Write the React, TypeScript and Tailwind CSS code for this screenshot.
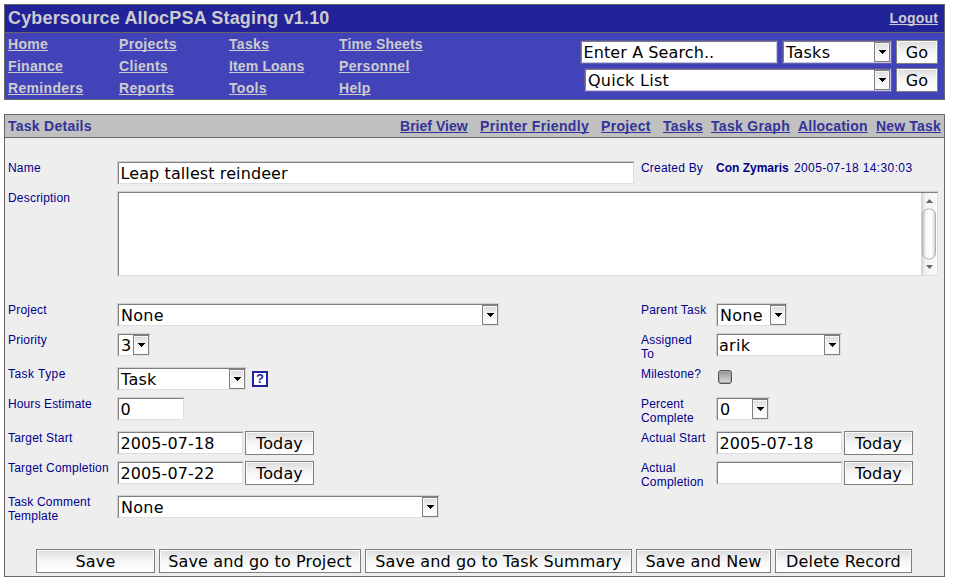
import React from "react";

const CONTROL_FONT = "font-['DejaVu_Sans',sans-serif] text-[16px] text-black";

type Tone = "dark" | "light";

const FRAME: Record<Tone, string> = {
  dark: "border-t-[#58589f] border-l-[#58589f] border-r-[#5f5fae] border-b-[#5f5fae]",
  light: "border-t-[#cfcfcf] border-l-[#cfcfcf] border-r-[#eeeeee] border-b-[#eeeeee]",
};
const INNER: Record<Tone, string> = {
  dark: "border-t-[#7a7a8c] border-l-[#7a7a8c] border-r-[#c3c3e6] border-b-[#c3c3e6]",
  light: "border-t-[#7f7f7f] border-l-[#7f7f7f] border-r-[#dedede] border-b-[#dedede]",
};

function Frame({ w, tone = "light", h = "h-6", children }: { w: string; tone?: Tone; h?: string; children: React.ReactNode }) {
  return (
    <div className={`flex shrink-0 border ${FRAME[tone]} ${w} ${h}`}>
      <div className={`flex min-w-0 flex-1 border bg-white ${INNER[tone]}`}>{children}</div>
    </div>
  );
}

function TextInput({ w, value, tone }: { w: string; value: string; tone?: Tone }) {
  return (
    <Frame w={w} tone={tone}>
      <input defaultValue={value} className={`h-5 w-full min-w-0 bg-transparent pt-px pl-[1.5px] leading-[19px] tracking-[0.1px] outline-none ${CONTROL_FONT}`} />
    </Frame>
  );
}

function SelectBox({ w, value, tone, pad = "pl-[2px]" }: { w: string; value: string; tone?: Tone; pad?: string }) {
  return (
    <Frame w={w} tone={tone}>
      <div className={`h-5 min-w-0 flex-1 overflow-hidden leading-[22px] tracking-[0.28px] whitespace-nowrap ${pad} ${CONTROL_FONT}`}>{value}</div>
      <div className="flex h-5 w-4 shrink-0 items-center justify-center border border-[#7f7f7f] bg-linear-to-b from-[#dddddd] via-[#f3f3f3] to-white shadow-[inset_0_0_0_1px_#f8f8f8]">
        <svg width="7" height="4" viewBox="0 0 7 4" shapeRendering="crispEdges">
          <path d="M0 0H7V1H6V2H5V3H4V4H3V3H2V2H1V1H0Z" fill="#000" />
        </svg>
      </div>
    </Frame>
  );
}

function Button({ w, children }: { w: string; children: string }) {
  return (
    <button
      className={`flex h-6 shrink-0 items-center justify-center whitespace-nowrap border border-[#7f7f7f] bg-linear-to-b from-[#dcdcdc] via-[#f6f6f6] via-50% to-white pt-[2px] leading-5 tracking-[0.14px] shadow-[inset_0_0_0_1px_#fafafa] ${w} ${CONTROL_FONT}`}
    >
      {children}
    </button>
  );
}

function Link({ children, className = "" }: { children: string; className?: string }) {
  return (
    <a
      href="#"
      className={`whitespace-nowrap underline decoration-1 underline-offset-1 [text-decoration-skip-ink:none] ${className}`}
    >
      {children}
    </a>
  );
}

function Row({ h, label, children, right, control }: { h: string; label: React.ReactNode; children: React.ReactNode; right?: string; control?: React.ReactNode }) {
  return (
    <div className={`flex items-start ${h}`}>
      <div className="w-[109px] shrink-0 whitespace-pre">{label}</div>
      <div className="flex w-[524px] shrink-0">{children}</div>
      {right && <div className="w-[75px] shrink-0 whitespace-pre">{right}</div>}
      {control}
    </div>
  );
}

const NAV = [
  ["Home", "Projects", "Tasks", "Time Sheets"],
  ["Finance", "Clients", "Item Loans", "Personnel"],
  ["Reminders", "Reports", "Tools", "Help"],
];

export default function App() {
  return (
    <div className="h-[584px] w-[954px] bg-white pt-1 pl-1 font-['Liberation_Sans',Arial,sans-serif]">
      <header className="w-[941px] border border-[#666666] font-bold text-[#cccccc]">
        <div className="flex h-7 items-center justify-between border-b border-[#666666] bg-[#222299] pr-[6px] pl-[3px]">
          <h1 className="pb-px text-[18px] leading-[26px] tracking-[0.17px]">Cybersource AllocPSA Staging v1.10</h1>
          <Link className="text-[14px] tracking-[0.2px]">Logout</Link>
        </div>
        <div className="flex h-[66px] justify-between bg-[#4242b9] pr-[6px] pl-[3px]">
          <nav className="grid grid-cols-[111px_110px_110px_110px] text-[14px] leading-[22px] tracking-[0.33px]">
            {NAV.flat().map((n) => (
              <div key={n}><Link className={n.includes(" ") ? "tracking-[0.14px]" : ""}>{n}</Link></div>
            ))}
          </nav>
          <div className="flex flex-col items-end gap-1 pt-[7px] font-normal">
            <div className="flex">
              <TextInput tone="dark" w="w-[198px]" value="Enter A Search.." />
              <div className="w-1" />
              <SelectBox tone="dark" w="w-[110px]" value="Tasks" />
              <div className="w-1" />
              <Button w="w-[42px]">Go</Button>
            </div>
            <div className="flex">
              <SelectBox tone="dark" w="w-[308px]" value="Quick List" />
              <div className="w-1" />
              <Button w="w-[42px]">Go</Button>
            </div>
          </div>
        </div>
      </header>

      <main className="mt-[14px] h-[463px] w-[941px] border border-[#666666] bg-[#eeeeee]">
        <div className="flex h-[23px] items-center justify-between border-b border-[#666666] bg-[#c0c0c0] pr-[3px] pl-[3px] text-[14px] leading-[22px] font-bold tracking-[0.26px] text-[#333399]">
          <h2>Task Details</h2>
          <div className="flex">
            <Link className="w-20 tracking-[0.03px]">Brief View</Link>
            <Link className="w-[121px] tracking-[0.35px]">Printer Friendly</Link>
            <Link className="w-[62px] tracking-[0.33px]">Project</Link>
            <Link className="w-12">Tasks</Link>
            <Link className="w-[87px] tracking-[0.3px]">Task Graph</Link>
            <Link className="w-[78px] tracking-[0.2px]">Allocation</Link>
            <Link className="w-[65px] tracking-[0.16px]">New Task</Link>
          </div>
        </div>

        <form className="pt-[23px] pl-[3px] text-[12px] leading-[14px] tracking-[0.2px] text-[#00008b]">
          <Row h="h-[30px]" label="Name" right="Created By" control={<div className="flex gap-[5px] whitespace-nowrap tracking-[0.37px]"><b className="w-[73px] tracking-normal">Con Zymaris</b><span>2005-07-18 14:30:03</span></div>}>
            <TextInput w="w-[518px]" value="Leap tallest reindeer" />
          </Row>
          <Row h="h-[112px]" label="Description">
            <Frame w="w-[822px]" h="h-[86px]">
              <textarea className={`h-full flex-1 resize-none outline-none ${CONTROL_FONT}`} />
              <div className="mr-px flex w-[15px] flex-col items-center bg-linear-to-r from-[#cfcfcf] via-[#f2f2f2] via-30% to-[#f8f8f8]">
                <svg width="15" height="82" viewBox="0 0 15 82">
                  <defs>
                    <linearGradient id="thumb">
                      <stop offset="0" stopColor="#c4c4c4" />
                      <stop offset=".3" stopColor="#fafafa" />
                      <stop offset=".7" stopColor="#ffffff" />
                      <stop offset="1" stopColor="#cccccc" />
                    </linearGradient>
                  </defs>
                  <path d="M8.5 6L12 10H5Z" fill="#666" />
                  <rect x="1.5" y="16" width="13" height="50" rx="6" fill="url(#thumb)" stroke="#b0b0b0" />
                  <path d="M8.5 76L12 72H5Z" fill="#666" />
                </svg>
              </div>
            </Frame>
          </Row>
          <Row h="h-[30px]" label="Project" right="Parent Task" control={<SelectBox w="w-[72px]" value="None" />}>
            <SelectBox w="w-[383px]" value="None" />
          </Row>
          <Row h="h-[34px]" label="Priority" right={"Assigned\nTo"} control={<SelectBox w="w-[126px]" value="arik" pad="pl-px" />}>
            <SelectBox w="w-[34px]" value="3" />
          </Row>
          <Row
            h="h-[30px]"
            label={<span className="tracking-[0.45px]">Task Type</span>}
            right="Milestone?"
            control={<div className="mt-[3px] ml-[2px] h-[14px] w-[14px] rounded-[3px] border border-[#555555] bg-linear-to-b from-[#909090] via-[#b8b8b8] to-[#dddddd] shadow-[inset_0_0_0_1px_#a8a8a8]" />}
          >
            <SelectBox w="w-[130px]" value="Task" />
            <div className="mt-1 ml-[5px] flex h-4 w-4 items-center justify-center border-2 border-[#2222a8] bg-white text-[13px] leading-3 font-bold tracking-normal text-[#2222a8]">?</div>
          </Row>
          <Row h="h-[34px]" label={<span className="tracking-[0.12px]">Hours Estimate</span>} right={"Percent\nComplete"} control={<SelectBox w="w-[54px]" value="0" />}>
            <TextInput w="w-[68px]" value="0" />
          </Row>
          <Row h="h-[30px]" label="Target Start" right="Actual Start" control={<div className="flex gap-px"><TextInput w="w-[127px]" value="2005-07-18" /><Button w="w-[69px]">Today</Button></div>}>
            <div className="flex gap-px"><TextInput w="w-[127px]" value="2005-07-18" /><Button w="w-[69px]">Today</Button></div>
          </Row>
          <Row h="h-[34px]" label="Target Completion" right={"Actual\nCompletion"} control={<div className="flex gap-px"><TextInput w="w-[127px]" value="" /><Button w="w-[69px]">Today</Button></div>}>
            <div className="flex gap-px"><TextInput w="w-[127px]" value="2005-07-22" /><Button w="w-[69px]">Today</Button></div>
          </Row>
          <Row h="h-[54px]" label={"Task Comment\nTemplate"}>
            <SelectBox w="w-[323px]" value="None" />
          </Row>
          <div className="flex gap-1 pl-7">
            <Button w="w-[119px]">Save</Button>
            <Button w="w-[202px]">Save and go to Project</Button>
            <Button w="w-[267px]">Save and go to Task Summary</Button>
            <Button w="w-[135px]">Save and New</Button>
            <Button w="w-[137px]">Delete Record</Button>
          </div>
        </form>
      </main>
    </div>
  );
}
